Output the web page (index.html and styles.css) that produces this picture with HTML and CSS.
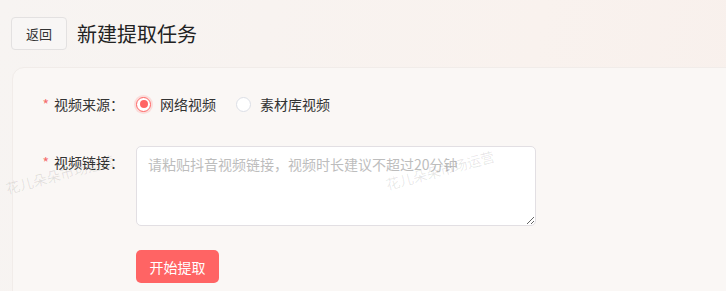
FILE: index.html
```html
<!DOCTYPE html>
<html lang="zh-CN">
  <head>
    <meta charset="UTF-8" />
    <meta name="viewport" content="width=device-width, initial-scale=1.0" />
    <title>新建提取任务</title>
    <link rel="stylesheet" href="styles.css">
  </head>
  <body>
    <div class="page-header">
      <button class="back-btn">返回</button>
      <h1 class="page-title">新建提取任务</h1>
    </div>

    <div class="card">
      <!-- 视频来源 -->
      <div class="form-row">
        <label class="form-label"><span class="required">*</span>视频来源：</label>
        <div class="form-control radios">
          <label class="radio checked"><span class="radio-dot"></span>网络视频</label>
          <label class="radio"><span class="radio-dot"></span>素材库视频</label>
        </div>
      </div>

      <!-- 视频链接 -->
      <div class="form-row">
        <label class="form-label"><span class="required">*</span>视频链接：</label>
        <div class="form-control">
          <textarea class="link-input" placeholder="请粘贴抖音视频链接，视频时长建议不超过20分钟"></textarea>
        </div>
      </div>

      <div class="form-row">
        <div class="form-label"></div>
        <div class="form-control">
          <button class="submit-btn">开始提取</button>
        </div>
      </div>
    </div>

    <!-- watermark -->
    <div class="watermark wm-1">花儿朵朵市场运营</div>
    <div class="watermark wm-2">花儿朵朵市场运营</div>
  </body>
</html>
```

FILE: styles.css
```css
* {
  box-sizing: border-box;
}

body {
  margin: 0;
  padding: 0;
  font-family: "Noto Sans CJK SC", "Noto Sans", sans-serif;
  background: linear-gradient(100deg, #f7f4f2 0%, #f9f2ee 70%, #f8f0ec 100%);
  color: #333;
  font-size: 14px;
  height: 291px;
  overflow: hidden;
  position: relative;
}

.page-header {
  display: flex;
  align-items: flex-start;
  padding: 17px 11px 0;
  height: 67px;
}

.back-btn {
  height: 33px;
  width: 56px;
  border: 1px solid #e3e1e1;
  border-radius: 4px;
  background: #f8f6f5;
  font-family: inherit;
  font-size: 13px;
  color: #333;
  cursor: pointer;
  padding: 0;
}

.page-title {
  margin: 0 0 0 10px;
  font-size: 20px;
  font-weight: normal;
  line-height: 33px;
  color: #222;
}

.card {
  margin-left: 12px;
  margin-right: -20px;
  height: 260px;
  background: #faf7f5;
  border: 1px solid #f1ece9;
  border-radius: 12px;
  padding: 20px 0 0;
}

.form-row {
  display: flex;
  margin-bottom: 26px;
}

.form-row:nth-child(2) {
  margin-bottom: 24px;
}

.form-label {
  width: 123px;
  padding-right: 12px;
  text-align: right;
  line-height: 32px;
  font-size: 14px;
  color: #333;
  flex-shrink: 0;
}

.required {
  color: #f56c6c;
  margin-right: 5px;
}

.radios {
  display: flex;
  align-items: center;
  height: 32px;
}

.radio {
  display: flex;
  align-items: center;
  margin-right: 20px;
  font-size: 14px;
  color: #333;
  cursor: pointer;
}

.radio-dot {
  width: 15px;
  height: 15px;
  border-radius: 50%;
  border: 1px solid #dcdfe6;
  background: #fff;
  margin-right: 9px;
  position: relative;
}

.radio.checked .radio-dot {
  border-color: #ff6464;
  box-shadow: 0 0 0 2px rgba(255, 100, 100, 0.18);
}

.radio.checked .radio-dot::after {
  content: "";
  position: absolute;
  left: 2.5px;
  top: 2.5px;
  width: 8px;
  height: 8px;
  border-radius: 50%;
  background: #ff6464;
}

.link-input {
  width: 400px;
  height: 80px;
  border: 1px solid #e2dfe3;
  border-radius: 5px;
  background: #fff;
  padding: 7px 11px;
  font-family: inherit;
  font-size: 14px;
  line-height: 20px;
  resize: vertical;
  display: block;
}

.link-input::placeholder {
  color: #bdbdbd;
}

.submit-btn {
  width: 83px;
  height: 33px;
  border: none;
  border-radius: 5px;
  background: #ff6464;
  color: #fff;
  font-family: inherit;
  font-size: 14px;
  cursor: pointer;
}

.watermark {
  position: absolute;
  font-size: 14px;
  color: rgba(0, 0, 0, 0.1);
  transform: rotate(-15deg);
  pointer-events: none;
  white-space: nowrap;
}

.wm-1 {
  left: 4px;
  top: 164px;
}

.wm-2 {
  left: 384px;
  top: 160px;
}
```
